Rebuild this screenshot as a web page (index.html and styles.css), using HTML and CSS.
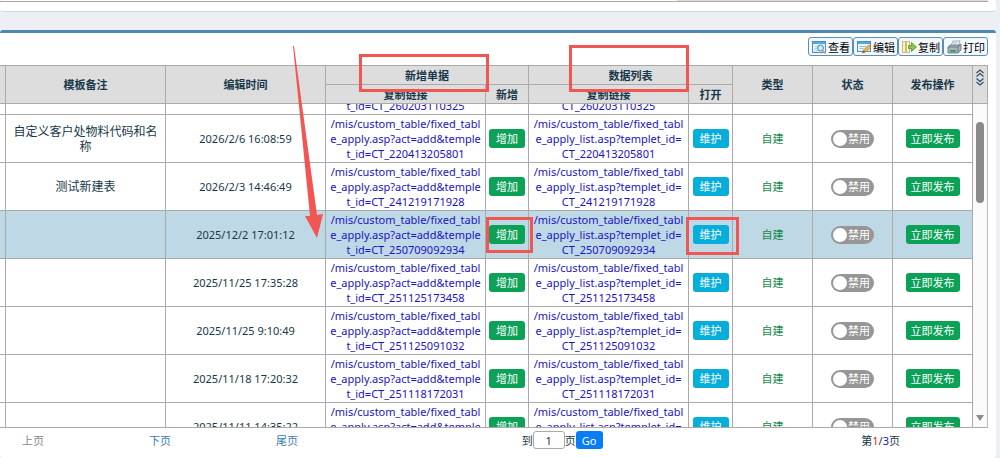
FILE: index.html
```html
<!DOCTYPE html>
<html lang="zh-CN">
<head>
    <meta charset="UTF-8">
    <meta name="viewport" content="width=device-width, initial-scale=1.0">
    <title>自定义模板</title>
    <link rel="stylesheet" href="styles.css">
</head>
<body>
    <div class="box box-prev">
        <div class="prev-grid"><div class="prev-scroll"></div></div>
    </div>

    <div class="box box-main">
        <div class="toolbar">
            <button type="button" class="tool">
                <svg width="15" height="14" viewBox="0 0 15 14"><rect x="0.5" y="1.5" width="13" height="11" fill="#e8f3fb" stroke="#4a8fc4"/><rect x="1" y="2" width="12" height="2" fill="#5ba7dc"/><path d="M2.5 6.5h3M2.5 8.5h3M2.5 10.5h4" stroke="#b5cfe2"/><circle cx="8.500" cy="8" r="3" fill="#c9e8f8" stroke="#3f8fb8"/><path d="M10.5 10.5l3 3" stroke="#d59a45" stroke-width="1.5"/></svg><span>查看</span>
            </button>
            <button type="button" class="tool">
                <svg width="15" height="14" viewBox="0 0 15 14"><rect x="0.5" y="1.5" width="13" height="10" fill="#e8f3fb" stroke="#4a8fc4"/><rect x="1" y="2" width="12" height="2" fill="#5ba7dc"/><path d="M2.5 6.5h7M2.5 8.5h4" stroke="#9bbdd6"/><path d="M5.5 13l1-3 5.5-5 2 2-5.5 5z" fill="#f3b44c" stroke="#b5792a" stroke-width="0.7"/><path d="M5.5 13l1-3 2 2z" fill="#8a5a35"/></svg><span>编辑</span>
            </button>
            <button type="button" class="tool">
                <svg width="15" height="14" viewBox="0 0 15 14"><rect x="0.5" y="1.5" width="3" height="11" fill="#fdf3c9" stroke="#d9b765"/><rect x="4.5" y="1.5" width="3" height="11" fill="#fff" stroke="#d9b765"/><path d="M6.5 5.5h3v-3l5 4.5-5 4.5v-3h-3z" fill="#8cc63f" stroke="#4d8f22" stroke-width="0.8"/></svg><span>复制</span>
            </button>
            <button type="button" class="tool">
                <svg width="15" height="14" viewBox="0 0 15 14"><path d="M4 6l2-5h7l-2 5z" fill="#fff" stroke="#8a98a5" stroke-width="0.8"/><path d="M6.5 2.5h4M6 4h4" stroke="#9fc3e0" stroke-width="0.8"/><path d="M1 7l2-2h9l2-1v6l-3 3H1z" fill="#a9b4bd" stroke="#5f6f7a" stroke-width="0.8"/><path d="M1 7h10v6M11 7l3-3" fill="none" stroke="#66757f" stroke-width="0.8"/><path d="M2.5 10h7l-1 2h-5z" fill="#3f9f5b"/></svg><span>打印</span>
            </button>
        </div>

        <div class="grid">
            <table class="grid-head">
                <colgroup>
                    <col class="c-edge"><col><col class="c-wide"><col class="c-wide"><col class="c-add"><col class="c-wide"><col class="c-open"><col class="c-mid"><col class="c-mid"><col class="c-mid"><col class="c-bar">
                </colgroup>
                <thead>
                    <tr>
                        <th rowspan="2"></th>
                        <th rowspan="2">模板备注</th>
                        <th rowspan="2">编辑时间</th>
                        <th colspan="2" class="group"><span class="marked mark-add">新增单据</span></th>
                        <th colspan="2" class="group"><span class="marked mark-list">数据列表</span></th>
                        <th rowspan="2">类型</th>
                        <th rowspan="2">状态</th>
                        <th rowspan="2">发布操作</th>
                        <th rowspan="2" class="fold"><svg width="10" height="18" viewBox="0 0 10 18"><path d="M1.500 5L5 2l3.500 3M1.500 8.500L5 5.500l3.500 3M1.500 10.500l3.500 3 3.500-3M1.500 14L5 17l3.500-3" fill="none" stroke="#2c4f60" stroke-width="1.2"/></svg></th>
                    </tr>
                    <tr class="sub">
                        <th>复制链接</th>
                        <th>新增</th>
                        <th>复制链接</th>
                        <th>打开</th>
                    </tr>
                </thead>
            </table>

            <div class="grid-body">
                <div class="rows">
                    <table>
                        <colgroup>
                            <col class="c-edge"><col><col class="c-wide"><col class="c-wide"><col class="c-add"><col class="c-wide"><col class="c-open"><col class="c-mid"><col class="c-mid"><col class="c-mid">
                        </colgroup>
                        <tbody id="rows"></tbody>
                    </table>
                </div>
                <div class="scrollbar">
                    <div class="thumb"></div>
                    <div class="down"></div>
                </div>
            </div>
        </div>

        <div class="pager">
            <span class="page-links">
                <a class="off" href="#prev">上页</a>
                <a href="#next">下页</a>
                <a href="#last">尾页</a>
            </span>
            <form class="jump">
                <label for="page">到</label><input id="page" type="text" value="1"><span>页</span><button type="button">Go</button>
            </form>
            <span class="count">第<b class="cur">1</b>/<b class="all">3</b>页</span>
        </div>

        <svg class="arrow" width="40" height="200" viewBox="0 0 40 200"><path d="M8 0L9 0L32 169L38 168L32 192L20 170L25 170Z" fill="#f15652"/></svg>
    </div>

    <script src="script.js"></script>
</body>
</html>
```
FILE: styles.css
```css
*, *::after {
    box-sizing: border-box;
}
body {
    margin: 0;
    padding-right: 4px;
    background-color: #ecf0f5;
    color: #17384a;
    font-family: "Noto Sans", "Noto Sans CJK SC", sans-serif;
    font-size: 11px;
    overflow: hidden;
}
button, input {
    font-family: inherit;
    font-size: 11px;
    margin: 0;
}
a {
    text-decoration: none;
}
.box {
    background-color: #fff;
    border-radius: 3px;
}
.box-prev {
    height: 12px;
    margin-bottom: 18px;
    padding-right: 8px;
    border-bottom: 1px solid #d2d6de;
}
.prev-grid {
    height: 2px;
    border-bottom: 1px solid #aaa;
}
.prev-scroll {
    width: 311px;
    height: 1px;
    margin-left: auto;
    background-color: #ddd;
}
.box-main {
    position: relative;
    min-height: 428px;
    padding-right: 8px;
    border-top: 3px solid #4a8ab4;
}

/* toolbar */
.toolbar {
    display: flex;
    justify-content: flex-end;
    padding: 4px 0 9px;
}
.tool {
    display: flex;
    align-items: center;
    gap: 1px;
    width: 45px;
    height: 19px;
    padding: 0 3px;
    border: 1px solid #5b8fb5;
    border-radius: 3px;
    background-color: #f3f8fd;
    color: #000;
    white-space: nowrap;
}
.tool svg {
    flex: none;
}

/* grid */
table {
    width: 100%;
    border-collapse: separate;
    border-spacing: 0;
    table-layout: fixed;
}
.c-edge { width: 6px; }
.c-wide { width: 160px; }
.c-add { width: 43px; }
.c-open { width: 44px; }
.c-mid { width: 80px; }
.c-bar { width: 15px; }
.grid {
    border-top: 1px solid #aaa;
    border-bottom: 1px solid #aaa;
}
th, td {
    padding: 0;
    border-right: 1px solid #aaa;
    border-bottom: 1px solid #aaa;
    text-align: center;
    vertical-align: middle;
}
th {
    height: 19px;
    background-color: #ddd;
    line-height: 16px;
}
.group, .sub th {
    padding-top: 2px;
}
.fold {
    vertical-align: top;
}
.fold svg {
    display: block;
    margin: 2px auto 0;
}
.grid-body {
    display: flex;
    height: 323px;
}
.rows {
    flex: 1;
    overflow: hidden;
}
/* list is scrolled down inside its window */
.rows table {
    margin-top: -37px;
}
td {
    height: 48px;
    line-height: 15px;
}
.note {
    padding: 0 6px;
    font-size: 12px;
}
.link a {
    color: #1a12c8;
}
.active td {
    background-color: #bfd8e5;
}
.btn {
    position: relative;
    height: 19px;
    padding: 0 7px;
    border: none;
    border-radius: 3px;
    background-color: #0ba257;
    color: #fff;
    line-height: 19px;
    vertical-align: middle;
}
.btn-info {
    background-color: #06aedb;
}
.btn-publish {
    padding: 0 5px;
}
.type {
    color: #138a4a;
}
.switch {
    display: inline-flex;
    align-items: center;
    gap: 1px;
    width: 43px;
    height: 18px;
    padding: 0 2px;
    border-radius: 9px;
    background-color: #969696;
    color: #fff;
    vertical-align: middle;
}
.switch input {
    appearance: none;
    flex: none;
    width: 14px;
    height: 14px;
    margin: 0;
    border-radius: 50%;
    background-color: #fff;
}
.scrollbar {
    display: flex;
    flex-direction: column;
    align-items: center;
    justify-content: space-between;
    width: 15px;
    padding: 18px 0 6px;
    border-right: 1px solid #bbb;
    background-color: #fafafa;
}
.thumb {
    width: 8px;
    height: 81px;
    border-radius: 4px;
    background-color: #8a8a8a;
}
.down {
    border: 4px solid transparent;
    border-top: 6px solid #8a8a8a;
    border-bottom: 0;
}

/* pager */
.pager {
    display: flex;
    align-items: center;
    justify-content: space-between;
    height: 24px;
    padding: 0 88px 0 22px;
}
.page-links {
    display: flex;
    gap: 105px;
}
.page-links a {
    color: #3b7db0;
}
.page-links .off {
    color: #888;
}
.jump {
    display: flex;
    align-items: center;
    margin-right: 35px;
}
.jump input {
    width: 32px;
    height: 18px;
    padding: 0;
    border: 1px solid #aaa;
    border-radius: 3px;
    color: #17384a;
    text-align: center;
}
.jump button {
    width: 27px;
    height: 18px;
    padding: 0;
    border: none;
    border-radius: 3px;
    background-color: #0a7cf5;
    color: #fff;
}
.count b {
    font-weight: normal;
}
.count .cur { color: #e8202a; }
.count .all { color: #1a12c8; }

/* red marks drawn over the grid */
.marked, .marked-btn {
    position: relative;
}
.marked::after, .marked-btn::after {
    content: "";
    position: absolute;
    border: 3px solid #f15652;
    pointer-events: none;
}
.mark-add::after {
    top: -14px;
    left: -46px;
    width: 130px;
    height: 38px;
}
.mark-list::after {
    top: -23px;
    left: -40px;
    width: 120px;
    height: 47px;
}
.marked-btn::after {
    top: -8px;
    left: -3px;
    width: 47px;
    height: 36px;
}
.btn-info.marked-btn::after {
    left: -7px;
    width: 53px;
    height: 38px;
}
.arrow {
    position: absolute;
    top: 13px;
    left: 285px;
}
```
FILE: script.js
```js
var rows = [
    ['', '2026/2/9 9:30:18', '260203110325'],
    ['自定义客户处物料代码和名称', '2026/2/6 16:08:59', '220413205801'],
    ['测试新建表', '2026/2/3 14:46:49', '241219171928'],
    ['', '2025/12/2 17:01:12', '250709092934'],
    ['', '2025/11/25 17:35:28', '251125173458'],
    ['', '2025/11/25 9:10:49', '251125091032'],
    ['', '2025/11/18 17:20:32', '251118172031'],
    ['', '2025/11/11 14:35:22', '251111143522']
];

function link(lines) {
    return '<td class="link"><a href="#">' + lines.join('<br>') + '</a></td>';
}

document.getElementById('rows').innerHTML = rows.map(function (row, i) {
    var id = row[2];
    var active = id === '250709092934';
    var mark = active ? ' marked-btn' : '';
    return '<tr' + (active ? ' class="active"' : '') + '><td></td>' +
        '<td class="note">' + row[0] + '</td>' +
        '<td>' + row[1] + '</td>' +
        link(['/mis/custom_table/fixed_tabl', 'e_apply.asp?act=add&amp;temple', 't_id=CT_' + id]) +
        '<td><button type="button" class="btn' + mark + '">增加</button></td>' +
        link(['/mis/custom_table/fixed_tabl', 'e_apply_list.asp?templet_id=', 'CT_' + id]) +
        '<td><button type="button" class="btn btn-info' + mark + '">维护</button></td>' +
        '<td class="type">自建</td>' +
        '<td><label class="switch" for="state' + i + '"><input type="checkbox" id="state' + i + '">禁用</label></td>' +
        '<td><button type="button" class="btn btn-publish">立即发布</button></td></tr>';
}).join('');
```
